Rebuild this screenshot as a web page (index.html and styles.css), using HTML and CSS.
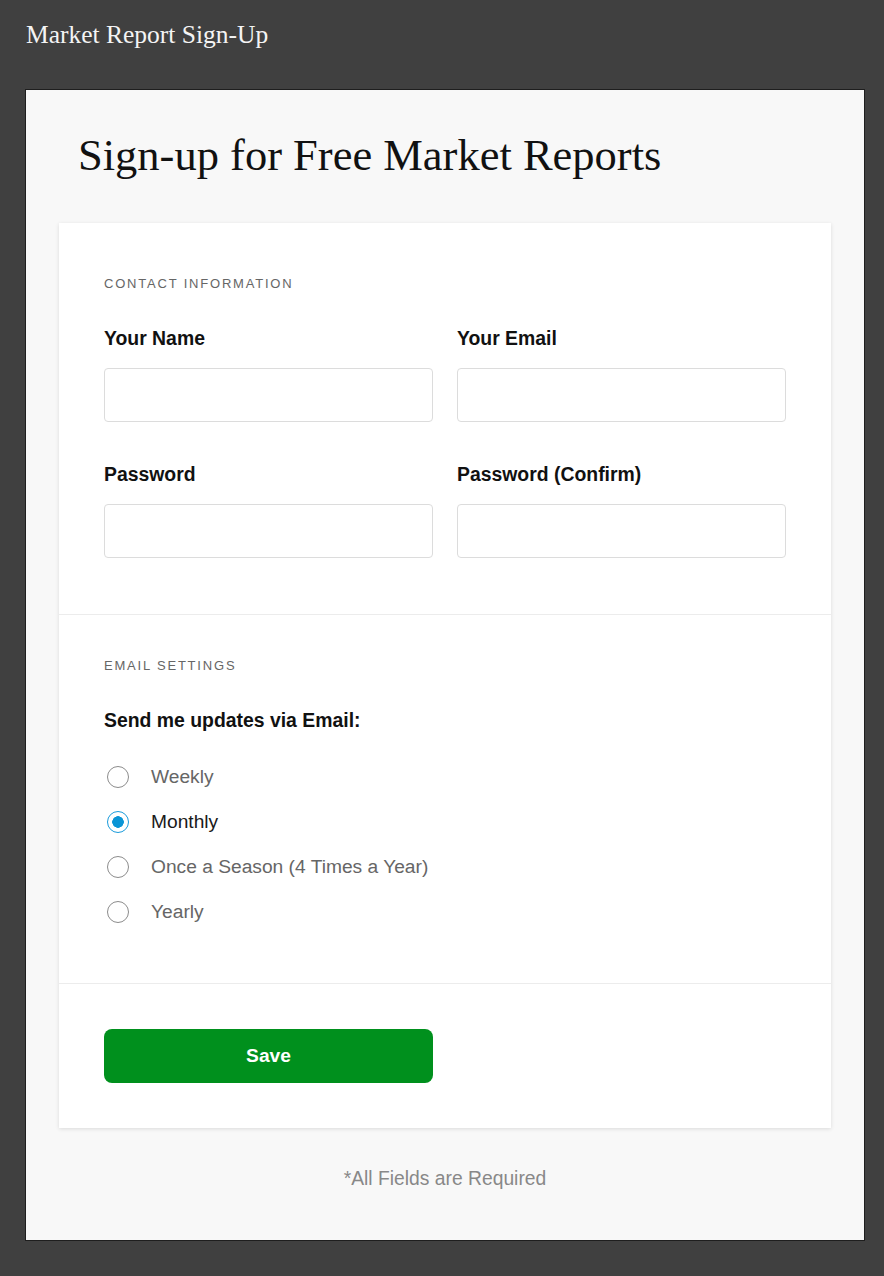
FILE: index.html
```html
<!DOCTYPE html>
<html>
<head>
<meta charset="utf-8">
<title>Market Report Sign-Up</title>
<link rel="stylesheet" href="styles.css">
</head>
<body>
<header class="topbar">Market Report Sign-Up</header>
<main class="panel">
  <h1 class="title">Sign-up for Free Market Reports</h1>
  <form class="card">
    <section class="section first">
      <div class="section-title">CONTACT INFORMATION</div>
      <div class="grid">
        <label class="field"><span class="label">Your Name</span><input class="input" type="text"></label>
        <label class="field"><span class="label">Your Email</span><input class="input" type="email"></label>
        <label class="field"><span class="label">Password</span><input class="input" type="password"></label>
        <label class="field"><span class="label">Password (Confirm)</span><input class="input" type="password"></label>
      </div>
    </section>
    <section class="section second">
      <div class="section-title">EMAIL SETTINGS</div>
      <div class="label question">Send me updates via Email:</div>
      <div class="radios">
        <label class="radio-row"><input class="radio" type="radio" name="freq"><span class="radio-text">Weekly</span></label>
        <label class="radio-row"><input class="radio" type="radio" name="freq" checked><span class="radio-text">Monthly</span></label>
        <label class="radio-row"><input class="radio" type="radio" name="freq"><span class="radio-text">Once a Season (4 Times a Year)</span></label>
        <label class="radio-row"><input class="radio" type="radio" name="freq"><span class="radio-text">Yearly</span></label>
      </div>
    </section>
    <section class="section third">
      <button class="save" type="button">Save</button>
    </section>
  </form>
  <p class="note">*All Fields are Required</p>
</main>
</body>
</html>
```

FILE: styles.css
```css
html, body {
  margin: 0;
  padding: 0;
  background: #404040;
}
body {
  font-family: "Liberation Sans", Arial, sans-serif;
  width: 884px;
  min-height: 1276px;
}
.topbar {
  height: 89px;
  box-sizing: border-box;
  padding: 18px 0 0 26px;
  font-family: "Liberation Serif", "Times New Roman", serif;
  font-size: 25.5px;
  line-height: 34px;
  color: #f4f4f4;
}
.panel {
  margin: 0 19px 0 25px;
  background: #f8f8f8;
  border: 1px solid #1e1e1e;
  padding: 35px 33px 49px;
}
.title {
  margin: 0 0 38px 19px;
  font-family: "Liberation Serif", "Times New Roman", serif;
  font-weight: normal;
  font-size: 44.5px;
  line-height: 60px;
  color: #111;
}
.card {
  display: block;
  background: #fff;
  box-shadow: 0 1px 4px rgba(0,0,0,0.12);
}
.section {
  padding: 43px 45px 45px;
  border-bottom: 1px solid #ececec;
}
.section.first {
  padding-top: 53px;
  padding-bottom: 56px;
}
.section.second {
  padding-bottom: 49px;
}
.section.third {
  border-bottom: none;
  padding-top: 45px;
  padding-bottom: 45px;
}
.section-title {
  font-size: 13px;
  line-height: 16px;
  letter-spacing: 1.8px;
  color: #666;
}
.grid {
  display: grid;
  grid-template-columns: 329px 329px;
  column-gap: 24px;
  row-gap: 40px;
  margin-top: 34px;
}
.field {
  display: flex;
  flex-direction: column;
}
.label {
  font-size: 19.4px;
  font-weight: bold;
  line-height: 24px;
  color: #111;
}
.input {
  margin-top: 18px;
  height: 54px;
  box-sizing: border-box;
  border: 1px solid #dcdcdc;
  border-radius: 4px;
  background: #fff;
  font: inherit;
  padding: 0 12px;
  outline: none;
}
.question {
  margin-top: 34px;
}
.radios {
  display: flex;
  flex-direction: column;
  margin-top: 22px;
}
.radio-row {
  display: flex;
  align-items: center;
  height: 45px;
}
.radio {
  appearance: none;
  -webkit-appearance: none;
  margin: 0 22px 0 3px;
  width: 22px;
  height: 22px;
  box-sizing: border-box;
  border: 1.5px solid #8c8c8c;
  border-radius: 50%;
  background: #fff;
  flex: none;
}
.radio:checked {
  border: 1.5px solid #1a9bdb;
  background: radial-gradient(circle, #0a95d6 0 5.5px, #fff 6px);
}
.radio-text {
  font-size: 19.2px;
  line-height: 24px;
  color: #666;
}
.radio:checked + .radio-text {
  color: #1a1a1a;
}
.save {
  display: block;
  width: 329px;
  height: 54px;
  border: none;
  border-radius: 8px;
  background: #00901d;
  color: #fff;
  font-family: "Liberation Sans", Arial, sans-serif;
  font-size: 19.2px;
  font-weight: bold;
  cursor: pointer;
}
.note {
  margin: 39px 0 0;
  text-align: center;
  font-size: 19.3px;
  line-height: 24px;
  color: #888;
}
```
